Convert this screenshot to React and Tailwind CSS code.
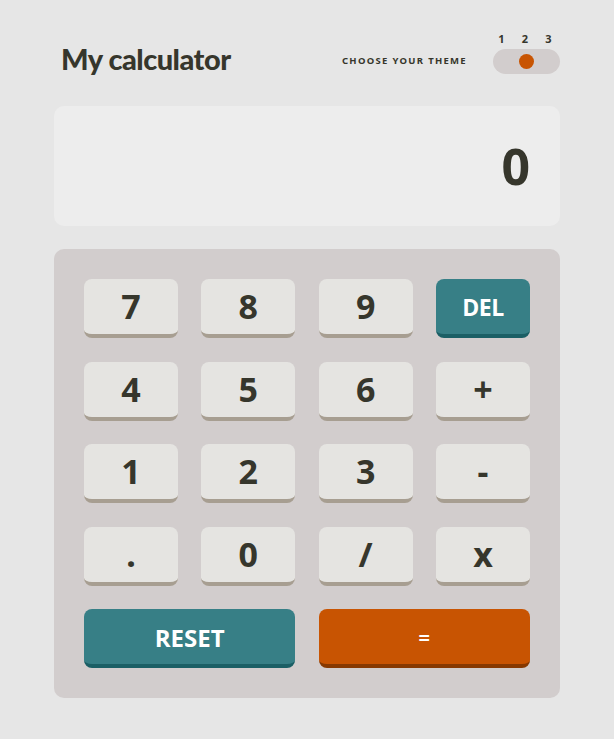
import React from "react";

const keys = [
  ["7", "n"], ["8", "n"], ["9", "n"], ["DEL", "del"],
  ["4", "n"], ["5", "n"], ["6", "n"], ["+", "n"],
  ["1", "n"], ["2", "n"], ["3", "n"], ["-", "n"],
  [".", "n"], ["0", "n"], ["/", "n"], ["x", "n"],
];

const bold = { fontFamily: '"Open Sans", "Noto Sans", sans-serif' };

function Key({ label, kind }) {
  if (kind === "del") {
    return (
      <button className="h-[59px] rounded-[8px] bg-[#377f86] border-b-4 border-[#1b5f65] text-white text-[23px] font-bold flex items-center justify-center pt-[2px] tracking-[-0.5px]" style={bold}>
        {label}
      </button>
    );
  }
  return (
    <button className="h-[59px] rounded-[8px] bg-[#e5e4e1] border-b-4 border-[#a79e91] text-[#36362c] text-[34px] font-bold flex items-center justify-center" style={{ fontFamily: '"Noto Sans", sans-serif' }}>
      {label}
    </button>
  );
}

export default function App() {
  return (
    <div className="min-h-[739px] w-full bg-[#e6e6e6]" style={{ fontFamily: '"Noto Sans", sans-serif' }}>
      <div className="mx-auto w-[506px] pt-[34px]">
        <header className="flex items-end justify-between h-[40px]">
          <h1 className="pl-[7px] text-[29px] font-black text-[#36362c] leading-none pb-[1px] tracking-[-0.5px]" style={{ fontFamily: 'Lato, "Noto Sans", sans-serif' }}>My calculator</h1>
          <div className="flex items-end gap-[26px]">
            <span className="text-[9.5px] font-bold tracking-[1.3px] text-[#36362c] pb-[6px]">CHOOSE YOUR THEME</span>
            <div className="flex flex-col w-[67px]">
              <div className="flex pl-[4.5px] gap-[15.5px] text-[11px] font-bold text-[#36362c] leading-none mb-[5px]">
                <span className="w-[8px] text-center">1</span>
                <span className="w-[8px] text-center">2</span>
                <span className="w-[8px] text-center">3</span>
              </div>
              <div className="h-[25px] w-[67px] rounded-full bg-[#d2cdcd] flex items-center justify-center">
                <div className="h-[15px] w-[15px] rounded-full bg-[#c85402]" />
              </div>
            </div>
          </div>
        </header>

        <div className="mt-[32px] h-[120px] rounded-[10px] bg-[#ededed] flex items-center justify-end pr-[30px]">
          <span className="text-[50px] font-bold text-[#36362c] leading-none">0</span>
        </div>

        <div className="mt-[23px] rounded-[10px] bg-[#d2cdcd] p-[30px] grid grid-cols-4 gap-x-[23.3px] gap-y-[23.5px]">
          {keys.map(([l, k]) => (
            <Key key={l} label={l} kind={k} />
          ))}
          <button className="col-span-2 h-[59px] rounded-[8px] bg-[#377f86] border-b-4 border-[#1b5f65] text-white text-[24px] font-bold flex items-center justify-center pt-[2px]" style={bold}>
            RESET
          </button>
          <button className="col-span-2 h-[59px] rounded-[8px] bg-[#c85402] border-b-4 border-[#873901] text-white text-[20px] font-bold flex items-center justify-center pt-[2px]" style={bold}>
            =
          </button>
        </div>
      </div>
    </div>
  );
}
